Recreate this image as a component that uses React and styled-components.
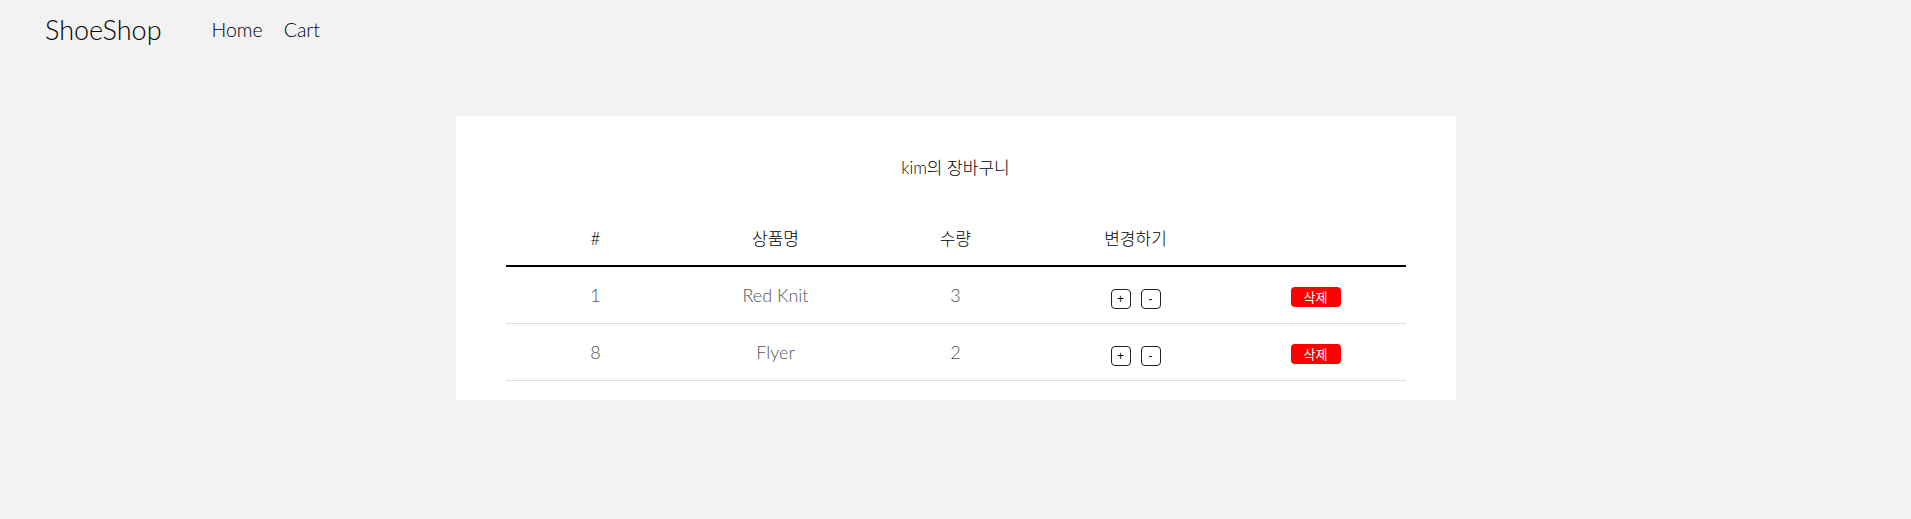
import React from "react"
import styled, { createGlobalStyle } from "styled-components"

const GlobalStyle = createGlobalStyle`
  html, body {
    margin: 0;
    padding: 0;
    background: #f2f2f2;
    font-family: Lato, "Noto Sans CJK KR", sans-serif;
    color: #111;
  }
`

const Navbar = styled.nav`
  display: flex;
  align-items: center;
  height: 50px;
  padding: 4px 45px 0;
`

const Brand = styled.a`
  font-size: 27px;
  font-weight: 300;
  color: #000;
  text-decoration: none;
  margin-right: 50px;
`

const NavLinks = styled.div`
  display: flex;
  gap: 21px;
`

const NavLink = styled.a`
  font-size: 19.5px;
  font-weight: 300;
  color: #000010;
  text-decoration: none;
`

const Page = styled.main`
  padding-top: 62px;
`

const Card = styled.section`
  width: 1000px;
  margin: 0 auto;
  background: #fff;
  box-sizing: border-box;
  padding: 38px 50px 19px;
`

const Title = styled.h4`
  margin: 0 0 32px;
  text-align: center;
  font-size: 17px;
  font-weight: 300;
  line-height: 27px;
  color: #000;
`

const Table = styled.table`
  width: 100%;
  border-collapse: collapse;
  table-layout: fixed;
`

const Th = styled.th`
  font-size: 17px;
  font-weight: 300;
  color: #000;
  padding: 12px 0;
  line-height: 28px;
  border-bottom: 2px solid #000;
  text-align: center;
`

const Td = styled.td`
  font-size: 18px;
  font-weight: 300;
  color: #555;
  padding: 14px 0;
  line-height: 28px;
  border-bottom: 1px solid #dedede;
  text-align: center;
  vertical-align: middle;
`

const Controls = styled.div`
  display: flex;
  justify-content: center;
  gap: ${(p) => p.gap || 0}px;
  padding-top: ${(p) => p.shift || 0}px;
`

const QtyButton = styled.button`
  width: 20px;
  height: 20px;
  padding: 0;
  border: 1px solid #222;
  border-radius: 4px;
  background: #fff;
  color: #000;
  font-family: "Liberation Sans", sans-serif;
  font-size: 12px;
  line-height: 18px;
  cursor: pointer;
`

const DeleteButton = styled.button`
  width: 50px;
  height: 20px;
  padding: 0;
  border: none;
  border-radius: 4px;
  background: #ff0000;
  color: #fff;
  font-family: "Noto Sans CJK KR", sans-serif;
  font-size: 13px;
  line-height: 20px;
  cursor: pointer;
`

const items = [
  { id: 1, name: "Red Knit", count: 3 },
  { id: 8, name: "Flyer", count: 2 },
]

const App = () => (
  <>
    <GlobalStyle />
    <Navbar>
      <Brand href="#">ShoeShop</Brand>
      <NavLinks>
        <NavLink href="#">Home</NavLink>
        <NavLink href="#">Cart</NavLink>
      </NavLinks>
    </Navbar>
    <Page>
      <Card>
        <Title>kim의 장바구니</Title>
        <Table>
          <thead>
            <tr>
              <Th>#</Th>
              <Th>상품명</Th>
              <Th>수량</Th>
              <Th>변경하기</Th>
              <Th />
            </tr>
          </thead>
          <tbody>
            {items.map((item) => (
              <tr key={item.id}>
                <Td>{item.id}</Td>
                <Td>{item.name}</Td>
                <Td>{item.count}</Td>
                <Td>
                  <Controls gap={10} shift={8}>
                    <QtyButton>+</QtyButton>
                    <QtyButton>-</QtyButton>
                  </Controls>
                </Td>
                <Td>
                  <Controls shift={4}>
                    <DeleteButton>삭제</DeleteButton>
                  </Controls>
                </Td>
              </tr>
            ))}
          </tbody>
        </Table>
      </Card>
    </Page>
  </>
)

export default App
